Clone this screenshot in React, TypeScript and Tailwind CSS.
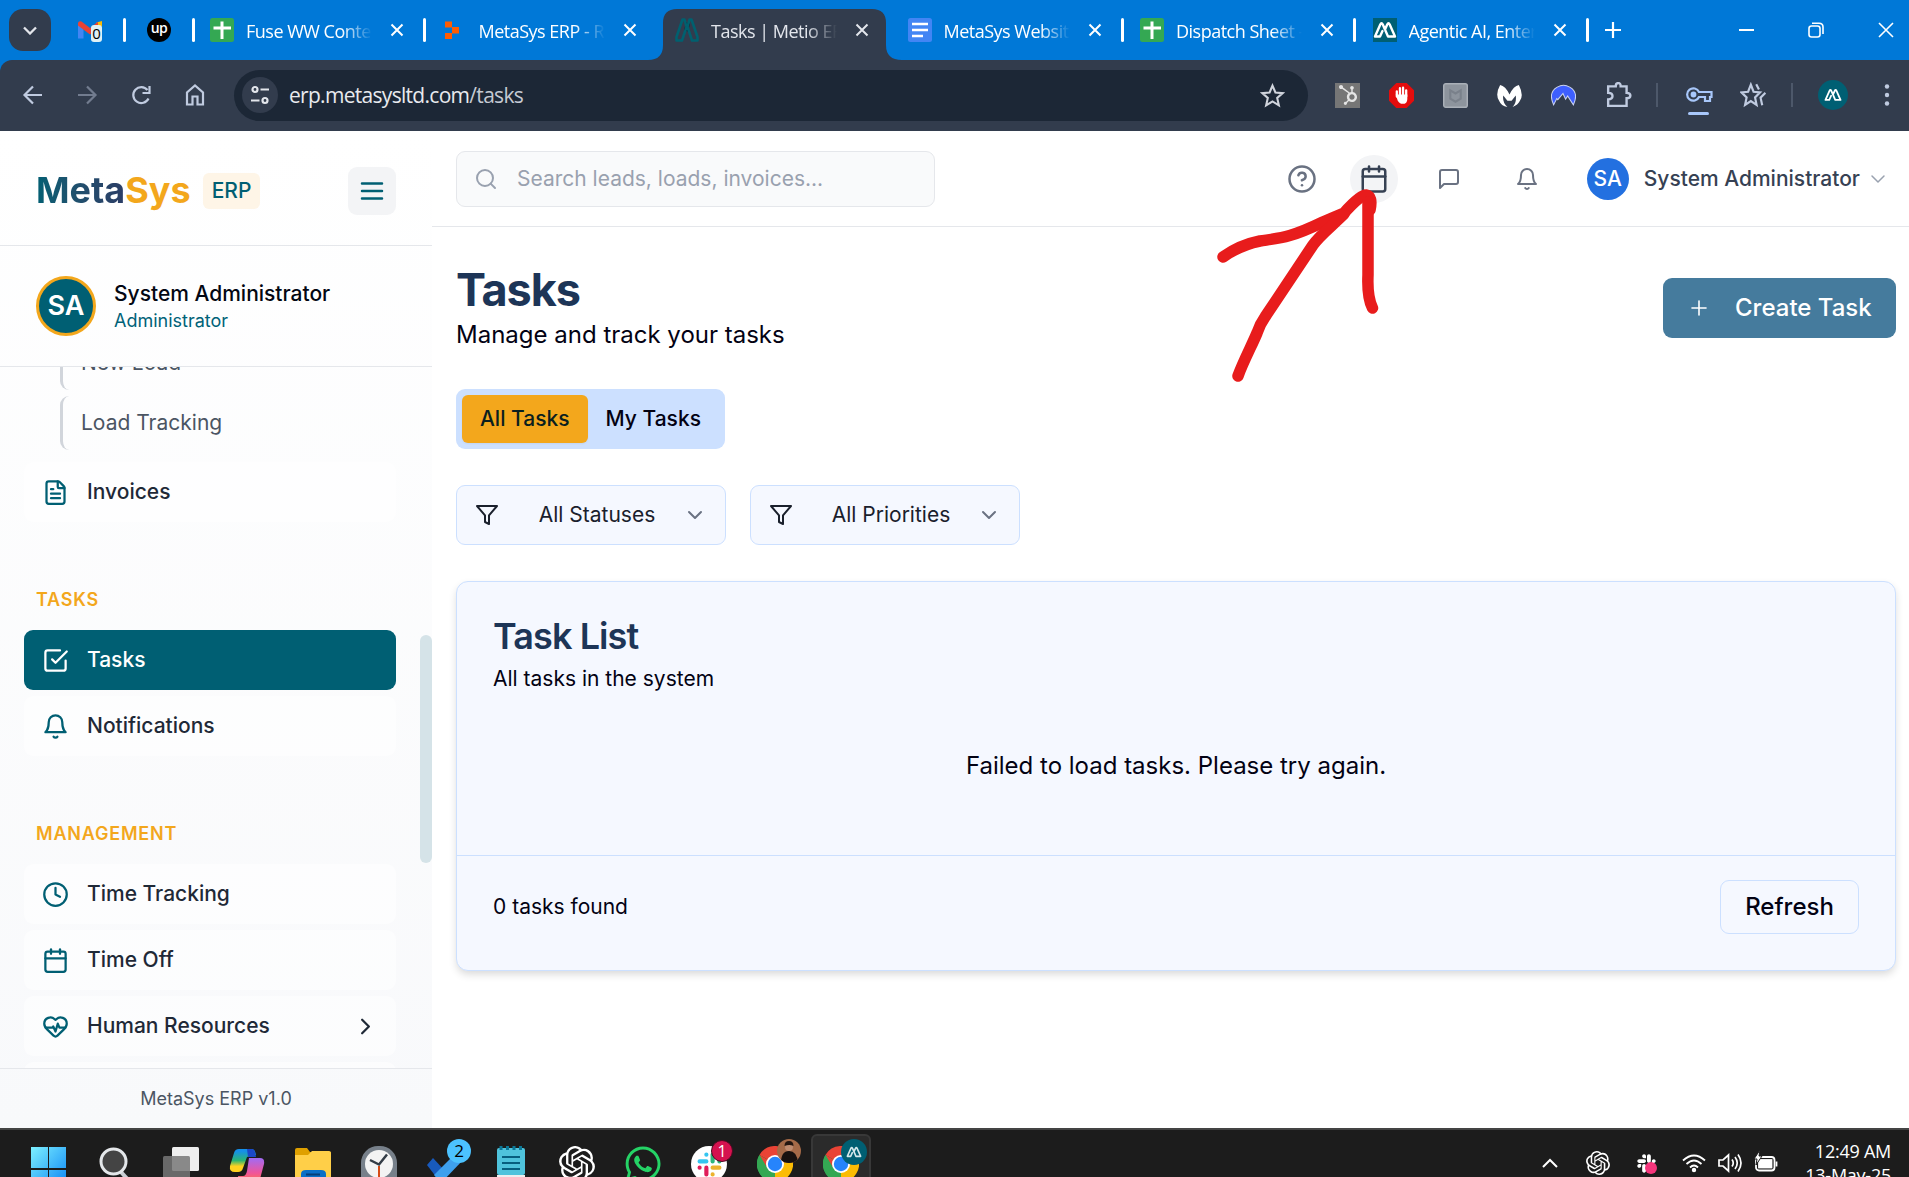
import React from "react";
import { FiBell, FiCalendar, FiCheckSquare, FiClock, FiFilter, FiMessageSquare, FiPlus, FiSearch, FiHelpCircle, FiChevronDown, FiChevronRight } from "react-icons/fi";
import { FaHubspot, FaSlack, FaWhatsapp } from "react-icons/fa";
import { SiOpenai } from "react-icons/si";
import { FileText, HeartPulse } from "lucide-react";

const ui = "font-['Open_Sans',sans-serif]";

function CloseX({ className = "" }: { className?: string }) {
  return (
    <svg viewBox="0 0 14 14" className={"h-[14px] w-[14px] shrink-0 " + className} stroke="currentColor" strokeWidth="2" fill="none">
      <path d="M1.5 1.5l11 11M12.5 1.5l-11 11" />
    </svg>
  );
}

function SheetsIcon() {
  return (
    <svg viewBox="0 0 24 24" className="h-6 w-6">
      <rect width="24" height="24" rx="2.5" fill="#34a853" />
      <path d="M3.5 10h17.500M12 3.500v17.500" stroke="#fff" strokeWidth="3" />
    </svg>
  );
}

function DocsIcon() {
  return (
    <svg viewBox="0 0 24 24" className="h-6 w-6">
      <rect width="24" height="24" rx="2.5" fill="#4285f4" />
      <path d="M4 6h16M4 12h16M4 18h11" stroke="#fff" strokeWidth="2.6" />
    </svg>
  );
}

function OrangeIcon() {
  return (
    <svg viewBox="0 0 24 24" className="h-6 w-6" fill="#ff5c00">
      <path d="M2 3.500h7v6H2zM2 15h7v6H2zM9 9h7v6.500H9z" />
    </svg>
  );
}

function Mark({ className, color, width = 2.4 }: { className: string; color: string; width?: number }) {
  return (
    <svg viewBox="0 0 24 24" className={className} fill="none" stroke={color} strokeWidth={width} strokeLinejoin="round" strokeLinecap="round">
      <path d="M9.500 13L7 18.500H2L7.300 6.500q1.200-2.500 2.500 0L15 18.500h7L16.700 6.500q-1.200-2.500-2.500 0L12 11.500" />
    </svg>
  );
}

function TealPeaks() {
  return (
    <svg viewBox="0 0 24 24" className="h-6 w-6" fill="none" stroke="#00606f" strokeWidth="2.600" strokeLinejoin="round">
      <path d="M13 5l-2 8" stroke="#111827" strokeWidth="4" />
      <path d="M7.500 1.500L1.500 19v3.500H7L11.500 9 9.500 1.500zM16.500 1.500L22.500 19v3.500H17L12.500 9l2-7.500z" />
    </svg>
  );
}

type TabProps = { icon: React.ReactNode; title: string; divider?: boolean; active?: boolean };

function Tab({ icon, title, divider, active }: TabProps) {
  return (
    <div className="flex h-full w-[232.500px] shrink-0 items-center">
      <div className="flex w-[228px] items-center pl-[15px]">
        {icon}
        <div
          className={
            "mt-[2px] ml-3 w-[126px] overflow-hidden whitespace-nowrap text-[18px] leading-6 tracking-[-0.500px] [mask-image:linear-gradient(90deg,#000_76%,transparent)] " +
            (active ? "text-[#e3e6ec]" : "text-white")
          }
        >
          <span>{title}</span>
        </div>
        <CloseX className={"ml-[18px] " + (active ? "text-[#e3e6ec]" : "text-white")} />
      </div>
      {divider && <div className="h-6 w-[3px] rounded-sm bg-white" />}
    </div>
  );
}

function TabStrip() {
  return (
    <div className="flex h-[60px] w-full items-center bg-[#0078d7]">
      <div className="ml-[9px] flex h-[42px] w-[42px] items-center justify-center rounded-[14px] bg-[#323c4d]">
        <svg viewBox="0 0 14 9" className="h-[9px] w-[14px]" fill="none" stroke="#e3e6ec" strokeWidth="2.300">
          <path d="M1 1.500l6 6 6-6" />
        </svg>
      </div>
      <div className="relative ml-[27px] h-6 w-6">
        <svg viewBox="0 0 24 24" className="h-6 w-6">
          <path d="M0 5v15.500h5.500V9z" fill="#4285f4" />
          <path d="M18.500 9v11.500H24V5z" fill="#34a853" />
          <path d="M18.500 4.500L24 3v5l-5.500 4z" fill="#fbbc04" />
          <path d="M0 6Q0 2.500 3.500 3.500L12 10l8-6.200V10.500L12 16.500 0 7.500z" fill="#ea4335" />
        </svg>
        <span className="absolute top-[7px] left-[13px] flex h-[17px] w-[11px] items-center justify-center rounded-[3px] bg-[#dff1f5] text-[15px] leading-none text-black">0</span>
      </div>
      <div className="ml-[21px] h-6 w-[3px] rounded-sm bg-white" />
      <div className="ml-[21px] flex h-6 w-6 items-center justify-center rounded-full bg-black pb-1 text-[14px] leading-none font-semibold tracking-[-0.500px] text-white">up</div>
      <div className="ml-[21px] h-6 w-[3px] rounded-sm bg-white" />
      <Tab icon={<SheetsIcon />} title="Fuse WW Content" divider />
      <Tab icon={<OrangeIcon />} title="MetaSys ERP - Re" />
      <div className="relative h-full shrink-0">
        <svg viewBox="0 0 254 51" className="absolute top-[9px] -left-[12px] h-[51px] w-[254px]" fill="#323c4d">
          <path d="M0 51Q15 51 15 36V14Q15 0 29 0H224Q238 0 238 14V36Q238 51 254 51z" />
        </svg>
        <div className="relative h-full">
          <Tab icon={<TealPeaks />} title="Tasks | Metio ERP" active />
        </div>
      </div>
      <Tab icon={<DocsIcon />} title="MetaSys Website" divider />
      <Tab icon={<SheetsIcon />} title="Dispatch Sheet - M" divider />
      <Tab icon={<span className="bg-[#005f73]"><Mark className="h-6 w-6" color="#fff" /></span>} title="Agentic AI, Enter" divider />
      <svg viewBox="0 0 16 16" className="ml-[15px] h-4 w-4 shrink-0" stroke="#fff" strokeWidth="2.200">
        <path d="M8 0v16M0 8h16" />
      </svg>
      <div className="mr-[15px] ml-auto flex items-center text-white">
        <div className="mr-[54px] h-[2px] w-[15px] bg-white" />
        <svg viewBox="0 0 16 16" className="mr-[54px] h-[16px] w-[16px]" fill="none" stroke="currentColor" strokeWidth="1.600">
          <rect x="1" y="4" width="11" height="11" rx="2.500" />
          <path d="M4 1.200h7Q15 1.200 15 5v7" />
        </svg>
        <svg viewBox="0 0 16 16" className="h-[16px] w-[16px]" fill="none" stroke="currentColor" strokeWidth="1.600">
          <path d="M1 1l14 14M15 1L1 15" />
        </svg>
      </div>
    </div>
  );
}

function ToolIcon({ children, className = "" }: { children: React.ReactNode; className?: string }) {
  return (
    <svg viewBox="0 0 24 24" className={"h-6 w-6 shrink-0 " + className} fill="none" stroke="#c0cbe0" strokeWidth="2.200">
      {children}
    </svg>
  );
}

const star = "M12 2.500l2.800 6.600 7.100.600-5.400 4.700 1.600 7L12 17.700l-6.100 3.700 1.600-7L2.100 9.700l7.100-.600z";

function Toolbar() {
  return (
    <div className="bg-[#0078d7]">
      <div className="flex h-[71px] w-full items-center rounded-tl-[12px] bg-[#323c4d] pb-px">
        <div className="ml-[21px] flex items-center gap-[30px]">
          <ToolIcon><path d="M21 12H4M12 3.500L3.500 12l8.500 8.500" /></ToolIcon>
          <ToolIcon className="opacity-45"><path d="M3 12h17M12 3.500l8.500 8.500-8.500 8.500" /></ToolIcon>
          <ToolIcon><path d="M19.500 15.500A8 8 0 1 1 18.500 7M20.500 3v7h-7" /></ToolIcon>
          <ToolIcon><path d="M4 21.500V9.500l8-7 8 7v12h-5.500v-8h-5v8z" /></ToolIcon>
        </div>
        <div className="ml-[27px] flex h-[51px] w-[1074px] items-center rounded-full bg-[#1c2736] pl-2">
          <div className="flex h-9 w-9 items-center justify-center rounded-full bg-[#323c4d]">
            <svg viewBox="0 0 20 20" className="h-5 w-5" fill="none" stroke="#e3e6ec" strokeWidth="2.200">
              <circle cx="5" cy="4.500" r="2.500" />
              <path d="M10.500 4.500H19M1 15.500h8.500" />
              <circle cx="15" cy="15.500" r="2.500" />
            </svg>
          </div>
          <div className="ml-[11px] text-[21px] leading-7 tracking-[-0.700px] text-[#c5cad3]">
            <span className="text-[#e8eaee]">erp.metasysltd.com</span>/tasks
          </div>
          <svg viewBox="0 0 24 24" className="mr-[23px] ml-auto h-[25px] w-[25px]" fill="none" stroke="#d0d4dc" strokeWidth="2">
            <path d={star} />
          </svg>
        </div>
        <div className="ml-[27px] flex items-center">
          <div className="flex h-[25px] w-[25px] items-center justify-center bg-[#767676] text-[#e5e5e5]"><FaHubspot size={20} /></div>
          <svg viewBox="0 0 24 24" className="ml-[29px] h-[25px] w-[25px]">
            <path d="M7 0h10l7 7v10l-7 7H7l-7-7V7z" fill="#e40d0d" />
            <path d="M7.500 13V8M10.500 12V5M13.500 12V4.500M16.500 13V7" stroke="#fff" strokeWidth="2.200" strokeLinecap="round" />
            <path d="M6.400 11h11.200v4q0 5-4.600 5-3 0-4.600-3z" fill="#fff" />
          </svg>
          <svg viewBox="0 0 24 24" className="ml-[29px] h-[25px] w-[25px]">
            <rect x=".7" y=".7" width="22.600" height="22.600" rx="2" fill="#8d949d" stroke="#aab0b8" strokeWidth="1.400" />
            <path d="M7 7l5 3 5-3v8l-5 3-5-3z" fill="none" stroke="#7a818b" strokeWidth="2" />
          </svg>
          <svg viewBox="0 0 24 24" className="ml-[29px] h-[25px] w-[25px]" fill="#fff">
            <path d="M3 2Q8 3 12 11 16 3 21 2q5 10 1 15-2 4-7 6 4-4 3-11l-4 5h-4L6 12q-1 7 4 11-6-1-8-6Q-2 11 3 2z" />
          </svg>
          <svg viewBox="0 0 24 24" className="ml-[29px] h-[25px] w-[25px]">
            <path d="M2.500 21Q-3 9 6 4q6-3.500 12 0 9 5 3.500 17L16 12.500l-2 3L11.500 10l-5 6-1-1z" fill="#3e5fff" stroke="#c9d2ef" strokeWidth="1" />
          </svg>
          <ToolIcon className="ml-[30px] h-[26px] w-[26px]"><path d="M2 4h7q0-3 2.300-3T13.500 4H19v6q3.500 0 3.500 2.500T19 15v7H2v-6q4 0 4-3t-4-3z" /></ToolIcon>
          <div className="ml-[24px] h-6 w-[2px] bg-[#4d586a]" />
          <div className="relative ml-[27px] h-6 w-7">
            <svg viewBox="0 0 28 24" className="h-6 w-7" fill="none" stroke="#a8c7fa" strokeWidth="2.200">
              <path d="M14 9h12.500v5H25v4h-5v-4h-6a6.200 6.200 0 1 1 0-5z" />
              <circle cx="8.500" cy="11.500" r="1.800" fill="#a8c7fa" />
            </svg>
            <span className="absolute top-[29px] left-[3px] h-[3px] w-[21px] rounded bg-[#a8c7fa]" />
          </div>
          <ToolIcon className="ml-[27px] h-[26px] w-[26px]">
            <g strokeWidth="2">
              <path d="M10 2.500l2.500 6.500 6 .6-4.600 4.600 1.400 7-5.300-3.600-5.300 3.600 1.400-7L1.500 9.700 7.500 9z" />
              <path d="M15 2l2.500 5M23.500 10l-4.500 4.500 1.500 7" />
            </g>
          </ToolIcon>
          <div className="ml-[25px] h-6 w-[2px] bg-[#4d586a]" />
          <div className="ml-[25px] flex h-[30px] w-[30px] items-center justify-center rounded-full bg-[#005f73]"><Mark className="h-[18px] w-[18px]" color="#fff" /></div>
          <svg viewBox="0 0 6 22" className="ml-[36px] h-[22px] w-[6px]" fill="#c0cbe0"><circle cx="3" cy="2.500" r="2.200" /><circle cx="3" cy="11" r="2.200" /><circle cx="3" cy="19.500" r="2.200" /></svg>
        </div>
      </div>
    </div>
  );
}

function NavItem({ icon, label, active, chevron }: { icon: React.ReactNode; label: string; active?: boolean; chevron?: boolean }) {
  return (
    <div
      className={
        "mb-[6px] flex h-[60px] w-[372px] shrink-0 items-center rounded-[9px] pr-[17px] pl-[18px] text-[21px] font-medium " +
        (active ? "bg-[#005f73] text-white" : "bg-white/50 text-[#1f2937]")
      }
    >
      <span className={"w-[45px] " + (active ? "text-white" : "text-[#005f73]")}>{icon}</span>
      <span>{label}</span>
      {chevron && <FiChevronRight size={27} className="ml-auto" />}
    </div>
  );
}

function SectionLabel({ children }: { children: React.ReactNode }) {
  return <div className="h-[31px] shrink-0 pl-3 text-[18px] leading-none font-semibold tracking-[0.800px] text-[#f3a71c]">{children}</div>;
}

function Sidebar() {
  return (
    <aside className="flex h-[997px] w-[432px] shrink-0 flex-col bg-gradient-to-b from-white to-[#f8f9fb]">
      <div className="flex h-[115px] shrink-0 items-center border-b border-gray-200 px-9">
        <div className="mt-[4px] text-[36px] leading-[40px] font-bold">
          <span className="bg-gradient-to-r from-[#005f73] to-[#2b3d66] bg-clip-text text-transparent">Meta</span>
          <span className="text-[#f3a71c]">Sys</span>
        </div>
        <div className="mt-[5px] ml-auto mr-[88px] flex h-9 w-[57px] items-center justify-center rounded-[6px] bg-[#fef5e7] text-[21px] font-medium text-[#005f73]">ERP</div>
        <div className="mt-[5px] flex h-12 w-12 items-center justify-center rounded-[9px] bg-gray-100">
          <svg viewBox="0 0 24 24" className="h-[30px] w-[30px]" stroke="#005f73" strokeWidth="2" strokeLinecap="round"><path d="M4 6h16M4 12h16M4 18h16" /></svg>
        </div>
      </div>
      <div className="flex h-[121px] shrink-0 items-center border-b border-gray-200 px-9">
        <div className="flex h-[60px] w-[60px] items-center justify-center rounded-full border-[3px] border-[#f3a71c] bg-[#005f73] text-[27px] font-semibold text-white">SA</div>
        <div className="ml-[18px]">
          <div className="text-[21px] leading-[30px] font-medium text-[#030712]">System Administrator</div>
          <div className="text-[18px] leading-6 text-[#006278]">Administrator</div>
        </div>
      </div>
      <div className="relative flex h-[701px] shrink-0 flex-col overflow-hidden pl-6">
        <div className="ml-9 flex h-[23px] shrink-0 flex-col justify-end overflow-hidden">
          <div className="flex h-[54px] shrink-0 items-center rounded-[9px] border-l-[3px] border-[#d1d5db] pl-[18px] text-[21px] text-[#4b5563]">New Load</div>
        </div>
        <div className="mt-[6px] ml-9 flex h-[54px] shrink-0 items-center rounded-[9px] border-l-[3px] border-[#d1d5db] pl-[18px] text-[21px] text-[#4b5563]">Load Tracking</div>
        <div className="h-3 shrink-0" />
        <NavItem icon={<FileText size={27} />} label="Invoices" />
        <div className="h-[63px] shrink-0" />
        <SectionLabel>TASKS</SectionLabel>
        <div className="h-[8px] shrink-0" />
        <NavItem icon={<FiCheckSquare size={27} />} label="Tasks" active />
        <NavItem icon={<FiBell size={27} />} label="Notifications" />
        <div className="h-[63px] shrink-0" />
        <SectionLabel>MANAGEMENT</SectionLabel>
        <div className="h-[8px] shrink-0" />
        <NavItem icon={<FiClock size={27} />} label="Time Tracking" />
        <NavItem icon={<FiCalendar size={27} />} label="Time Off" />
        <NavItem icon={<HeartPulse size={27} />} label="Human Resources" chevron />
        <NavItem icon={null} label="" />
        <span className="absolute top-[268px] right-0 h-[228px] w-3 rounded-full bg-[#d5e3e8]" />
      </div>
      <div className="flex h-[60px] shrink-0 items-center justify-center border-t border-gray-200 text-[18px] text-[#4b5563]">MetaSys ERP v1.0</div>
    </aside>
  );
}

function Select({ label }: { label: string }) {
  return (
    <div className="flex h-[60px] w-[270px] items-center rounded-[9px] border border-[#cce0ff] bg-[#f5f8ff] px-[18px] text-[21px] text-[#1a202c]">
      <FiFilter size={24} />
      <span className="flex-1 pl-[12px] text-center">{label}</span>
      <FiChevronDown size={24} className="text-gray-500" />
    </div>
  );
}

function Header() {
  return (
    <header className="flex h-24 shrink-0 items-center border-b border-gray-200 pl-6">
      <div className="flex h-14 w-[479px] items-center rounded-[9px] border border-gray-200 bg-gray-50 pl-[17px] text-[21px] text-gray-400">
        <FiSearch size={24} />
        <span className="ml-[19px]">Search leads, loads, invoices...</span>
      </div>
      <div className="mr-[23px] ml-auto flex items-center text-gray-500">
        <FiHelpCircle size={30} />
        <div className="ml-[33px] flex h-12 w-12 items-center justify-center rounded-full bg-gray-100 text-gray-700"><FiCalendar size={30} /></div>
        <FiMessageSquare size={24} className="ml-[39px]" />
        <FiBell size={24} className="ml-[54px]" />
        <div className="ml-[48px] flex h-[42px] w-[42px] items-center justify-center rounded-full bg-[#2370e0] text-[21px] font-medium text-white">SA</div>
        <span className="ml-[15px] text-[21px] font-medium text-gray-700">System Administrator</span>
        <FiChevronDown size={24} className="-mr-[4px] ml-[6px] text-gray-400" strokeWidth={1.500} />
      </div>
    </header>
  );
}

function Main() {
  return (
    <main className="flex min-w-0 flex-1 flex-col bg-white">
      <Header />
      <div className="pr-[13px] pl-6">
        <div className="flex items-start justify-between pt-[36px]">
          <div>
            <h1 className="text-[45px] leading-[54px] font-bold tracking-[-1.125px] text-[#1d3557]">Tasks</h1>
            <p className="text-[24px] leading-[36px] text-[#030213]">Manage and track your tasks</p>
          </div>
          <button className="mt-[15px] flex h-[60px] w-[233px] items-center rounded-[9px] bg-[#457b9d] pl-[24px] text-[24px] font-medium text-white">
            <FiPlus size={24} strokeWidth={1.600} />
            <span className="ml-[24px]">Create Task</span>
          </button>
        </div>
        <div className="mt-[36px] flex h-[60px] w-[269px] items-center rounded-[9px] bg-[#cce0ff] px-[6px] text-[21px] font-medium text-[#030213]">
          <div className="flex h-12 w-[126px] items-center justify-center rounded-[6px] bg-[#f3a71c] text-[#0b1f1f] shadow-xs">All Tasks</div>
          <div className="flex w-[132px] items-center justify-center">My Tasks</div>
        </div>
        <div className="mt-9 flex gap-6">
          <Select label="All Statuses" />
          <Select label="All Priorities" />
        </div>
        <section className="mt-9 flex h-[390px] flex-col rounded-[12px] border border-[#cce0ff] bg-[#f5f8ff] text-[#030213] shadow-[0_4px_9px_-1px_rgba(0,0,0,0.16)]">
          <div className="h-[273px] px-9 pt-[36px]">
            <h2 className="text-[36px] leading-[36px] font-semibold tracking-[-0.900px] text-[#1d3557]">Task List</h2>
            <p className="mt-[10px] text-[21px] leading-[30px]">All tasks in the system</p>
            <p className="mt-[54px] text-center text-[24px] leading-9">Failed to load tasks. Please try again.</p>
          </div>
          <div className="flex flex-1 items-start justify-between border-t border-[#cce0ff] px-9 pt-6">
            <span className="pt-[11px] text-[21px] leading-[32px]">0 tasks found</span>
            <button className="h-[54px] w-[139px] rounded-[9px] border border-[#cce0ff] text-[24px] font-medium">Refresh</button>
          </div>
        </section>
      </div>
    </main>
  );
}

function Chrome() {
  return (
    <svg viewBox="0 0 36 36" className="h-9 w-9">
      <path d="M18 18L2.400 9A18 18 0 0 1 33.600 9z" fill="#ea4335" />
      <path d="M18 18L33.600 9A18 18 0 0 1 18 36z" fill="#fbbc04" />
      <path d="M18 18v18A18 18 0 0 1 2.400 9z" fill="#34a853" />
      <path d="M18 18L2.400 9 10 21.500zM18 9h15.600L26 18z" fill="#ea4335" />
      <path d="M26 19L18 36 13 30z" fill="#fbbc04" />
      <path d="M2.400 9L10.200 22.500 18 27V36A18 18 0 0 1 2.400 9z" fill="#34a853" />
      <circle cx="18" cy="18" r="9" fill="#fff" />
      <circle cx="18" cy="18" r="7.200" fill="#2684fc" />
    </svg>
  );
}

function Slot({ children, active }: { children: React.ReactNode; active?: boolean }) {
  return (
    <div className="flex h-[60px] w-[66px] shrink-0 justify-center">
      <div className={"flex h-[60px] w-[60px] justify-center " + (active ? "rounded-[6px] border-2 border-[#383838] bg-[#2b2b2b] pt-[10px]" : "pt-3")}>
        <div className="relative h-9 w-9">{children}</div>
      </div>
    </div>
  );
}

function Taskbar() {
  return (
    <footer className={"flex h-[49px] w-full shrink-0 items-start overflow-hidden border-t-2 border-[#444] bg-[#1c1c1c] pt-[4px] pl-4 " + ui}>
      <Slot>
        <svg viewBox="0 0 36 36" className="h-9 w-9">
          <defs><linearGradient id="win" x2="1" y2="1"><stop stopColor="#7df0ff" /><stop offset="1" stopColor="#0a84f5" /></linearGradient></defs>
          <path d="M0 1h17v21H0zM18 1h17v21H18zM0 24h17v17H0zM18 24h17v17H18z" fill="url(#win)" />
        </svg>
      </Slot>
      <Slot>
        <svg viewBox="0 0 36 36" className="h-9 w-9"><path d="M24 26l10 11" stroke="#c9ced4" strokeWidth="4" /><circle cx="16.500" cy="15.500" r="12.500" fill="#444" stroke="#e4e7ea" strokeWidth="3" /></svg>
      </Slot>
      <Slot>
        <svg viewBox="0 0 36 36" className="h-9 w-9"><rect x="9" y="1" width="27" height="24" rx="1.500" fill="#eee" /><rect y="10" width="27" height="27" rx="1.500" fill="#777" fillOpacity=".85" /></svg>
      </Slot>
      <Slot>
        <svg viewBox="0 0 36 36" className="h-9 w-9">
          <defs>
            <linearGradient id="c1" x2="0" y2="1"><stop offset=".1" stopColor="#1590e8" /><stop offset=".5" stopColor="#2bb673" /><stop offset=".75" stopColor="#ffd21f" /></linearGradient>
            <linearGradient id="c2" x2="0" y2="1"><stop stopColor="#a06bf5" /><stop offset=".6" stopColor="#f0559a" /><stop offset="1" stopColor="#ff7a3c" /></linearGradient>
          </defs>
          <path d="M10 3h13q3 0 4 6l-9 2-4 11q-1 4-5 4H6q-6 0-5-6L5 7q1-4 5-4z" fill="url(#c1)" />
          <path d="M18 3h5q3 0 4 8h-8z" fill="#1b48c8" />
          <path d="M20 12h11q5 0 4 6l-4 15q-1 4-5 4H13q-3 0-4-7h5q3 0 4-5z" fill="url(#c2)" />
        </svg>
      </Slot>
      <Slot>
        <svg viewBox="0 0 36 36" className="h-9 w-9"><path d="M0 4q0-2 2-2h10l3 4H36v30H0z" fill="#dfa000" /><path d="M0 9h13l4-4h17q2 0 2 2v29H0z" fill="#ffcf48" /><path d="M6 36v-8q0-4 5-4h15q5 0 5 4v8z" fill="#0b6fc7" /><path d="M11 28.500h14" stroke="#063f78" strokeWidth="2" /></svg>
      </Slot>
      <Slot>
        <svg viewBox="0 0 36 36" className="h-9 w-9"><rect width="36" height="48" rx="17" fill="#77808a" /><circle cx="18" cy="18" r="14" fill="#f3f3f3" /><path d="M9 14l9 4.500 8-10" fill="none" stroke="#333c46" strokeWidth="2.500" /><path d="M18 20v12" stroke="#d64b16" strokeWidth="2" /></svg>
      </Slot>
      <Slot>
        <svg viewBox="0 0 36 36" className="h-9 w-9"><path d="M0 19l6-7 12 13-5 11z" fill="#185abd" /><path d="M7 29L30 6l7 7-23 24z" fill="#3ea0ee" /></svg>
        <span className="absolute -top-[7px] left-[20px] flex h-6 w-6 items-center justify-center rounded-full bg-[#4cc2ff] text-[17px] text-black">2</span>
      </Slot>
      <Slot>
        <svg viewBox="0 0 36 36" className="h-9 w-9"><rect x="4" y="2" width="28" height="27" rx="2" fill="#4fc3dc" /><path d="M4 29h28v7H4z" fill="#eee" /><path d="M9 11h18M9 17h18M9 23h18" stroke="#075e7e" strokeWidth="2" /><path d="M8 0v4M14.500 0v4M21 0v4M27.500 0v4" stroke="#0b7897" strokeWidth="3" /></svg>
      </Slot>
      <Slot><SiOpenai size={36} color="#fff" /></Slot>
      <Slot><FaWhatsapp size={40} color="#25d366" className="-mt-[2px] -ml-[2px]" /></Slot>
      <Slot>
        <div className="flex h-9 w-9 items-center justify-center rounded-full bg-white">
          <svg viewBox="0 0 24 24" className="h-[25px] w-[25px]" strokeWidth="4" strokeLinecap="round">
            <path d="M9 2.500v.1M9 9H2.500" stroke="#36c5f0" /><path d="M15 2.500V9M21.500 9v.1" stroke="#2eb67d" />
            <path d="M15 15h6.500M15 21.500v.1" stroke="#ecb22e" /><path d="M9 15v6.500M2.500 15v.1" stroke="#e01e5a" />
          </svg>
        </div>
        <span className="absolute -top-[6px] left-[20px] flex h-[22px] w-[22px] items-center justify-center rounded-full border border-[#4b0a20] bg-[#d5124f] text-[16px] text-white">1</span>
      </Slot>
      <Slot>
        <Chrome />
        <svg viewBox="0 0 24 24" className="absolute -top-[7px] left-[20px] h-6 w-6">
          <defs><clipPath id="face"><circle cx="12" cy="12" r="12" /></clipPath></defs>
          <g clipPath="url(#face)"><path d="M0 0h24v24H0z" fill="#a56a48" /><path d="M4 24q0-12 8-12t9 12z" fill="#17110f" /><circle cx="12" cy="8" r="4" fill="#c08c70" /><path d="M7.500 7q0-5 4.500-5t4.500 5q-4-2-9 0z" fill="#241510" /></g>
        </svg>
      </Slot>
      <Slot active>
        <Chrome />
        <span className="absolute -top-[7px] left-[18px] flex h-[26px] w-[26px] items-center justify-center rounded-full bg-[#005f73]"><Mark className="h-[16px] w-[16px]" color="#d5e8ec" /></span>
      </Slot>
      <div className="ml-auto flex shrink-0 items-start pr-[18px] text-white">
        <svg viewBox="0 0 16 10" className="mt-[24px] h-[10px] w-4" fill="none" stroke="#fff" strokeWidth="2"><path d="M1 9l7-7 7 7" /></svg>
        <SiOpenai size={24} className="mt-[17px] ml-[28px]" />
        <div className="relative mt-[19px] ml-[26px]">
          <FaSlack size={21} />
          <span className="absolute top-[9px] left-[9px] h-3 w-3 rounded-full bg-[#f6357c]" />
        </div>
        <svg viewBox="0 0 24 18" className="mt-[19px] ml-[25px] h-[20px] w-6" fill="none" stroke="#fff" strokeWidth="1.800"><path d="M1 6.500q11-10 22 0M4.500 10q7.500-7 15 0M8 13.500q4-4 8 0" /><circle cx="12" cy="16" r="1.300" fill="#fff" /></svg>
        <svg viewBox="0 0 24 20" className="mt-[19px] ml-[12px] h-[20px] w-6" fill="none" stroke="#fff" strokeWidth="1.700"><path d="M1 7h4l5.500-5v16L5 13H1zM14 6.500q2.500 3.500 0 7M17 4q4.500 6 0 12M20 1.500q6 8.500 0 17" /></svg>
        <svg viewBox="0 0 24 20" className="mt-[18px] ml-[12px] h-[20px] w-6 overflow-visible" fill="none" stroke="#fff" strokeWidth="1.800"><rect x="2" y="5" width="18.500" height="13.500" rx="3" /><rect x="5" y="8" width="12.500" height="7.500" fill="#fff" /><path d="M22.500 9.500v5" /><path d="M6-2L0 7h3L2 13 8 4H5z" fill="#fff" stroke="#1c1c1c" strokeWidth="1" /></svg>
        <div className="ml-[25px] w-[88px] text-right text-[18px] leading-[24px] tracking-[-0.250px] whitespace-nowrap">
          <div className="mt-[5px]">12:49 AM</div>
          <div>13-May-25</div>
        </div>
      </div>
    </footer>
  );
}

function RedArrow() {
  return (
    <svg viewBox="0 0 180 210" className="pointer-events-none absolute top-[180px] left-[1210px] h-[210px] w-[180px]" fill="none" stroke="#e81c1c" strokeWidth="11.500" strokeLinecap="round" strokeLinejoin="round">
      <path d="M13 77Q30 65 50 61C70 58 80 58 113 42Q122 38 134 33Q150 15 156 15Q163 16 160 30" />
      <path d="M28 196C33 182 43 163 47 153Q50 144 55 137L103 65C110 55 122 46 134 34" />
      <path d="M158 22V95Q157 117 162.500 128" />
    </svg>
  );
}

export default function App() {
  return (
    <div className="relative flex h-[1177px] w-[1909px] flex-col overflow-hidden bg-white font-['Inter',sans-serif]">
      <div className={"shrink-0 " + ui}>
        <TabStrip />
        <Toolbar />
      </div>
      <div className="flex h-[997px] shrink-0">
        <Sidebar />
        <Main />
      </div>
      <Taskbar />
      <RedArrow />
    </div>
  );
}
